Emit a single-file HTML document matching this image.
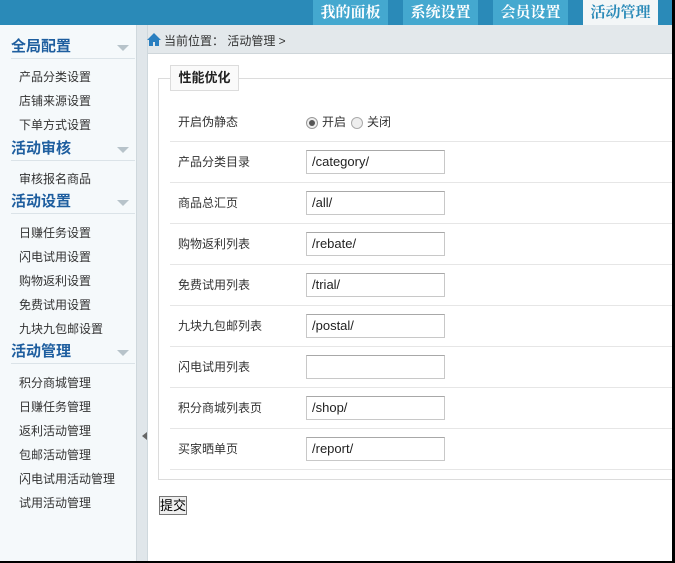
<!DOCTYPE html>
<html><head><meta charset="utf-8"><style>
*{margin:0;padding:0;box-sizing:border-box}
body{width:675px;height:563px;overflow:hidden;position:relative;background:#fff;font-family:"Liberation Sans","Noto Sans CJK SC",sans-serif;font-size:12px;color:#333}
.a{position:absolute}
.tab{position:absolute;top:0;height:25px;width:75px;background:#44a8cf;color:#fff;font-weight:bold;font-size:15px;text-align:center;line-height:23px;font-family:"Noto Serif CJK SC","Noto Sans CJK SC",serif}
.h{position:absolute;left:11px;width:124px;color:#1e5e9f;font-weight:bold;font-size:15px;height:24px;line-height:24px;border-bottom:1px solid #dbe3e8}
.h:after{content:"";position:absolute;right:6px;top:10px;border:6px solid transparent;border-top:6px solid #b7c3ca;border-bottom:0}
.it{position:absolute;left:19px;font-size:12px;color:#333;line-height:14px}
.lb{position:absolute;left:178px;font-size:12px;line-height:14px}
.in{position:absolute;left:306px;width:139px;height:24px;border:1px solid #c8c8c8;border-top-color:#a8a8a8;background:#fff;font-size:13px;line-height:22px;padding-left:5px;color:#222}
.ln{position:absolute;left:170px;width:502px;height:1px;background:#e6e6e6}
</style></head><body>
<div class="a" style="left:0;top:0;width:675px;height:25px;background:#2a8ab8"></div>
<div class="tab" style="left:313px">我的面板</div>
<div class="tab" style="left:403px">系统设置</div>
<div class="tab" style="left:493px">会员设置</div>
<div class="tab" style="left:583px;background:#f3f6f7;color:#2a8ab8">活动管理</div>
<div class="a" style="left:0;top:25px;width:136px;height:538px;background:#f5f9fb"></div>
<div class="a" style="left:136px;top:25px;width:12px;height:538px;background:#e0e6ea;border-left:1px solid #cfd8dd;border-right:1px solid #cfd8dd"></div>
<div class="a" style="left:142px;top:432px;border:4px solid transparent;border-right:5px solid #666;border-left:0"></div>
<div class="h" style="top:35px">全局配置</div>
<div class="it" style="top:70px">产品分类设置</div>
<div class="it" style="top:94px">店铺来源设置</div>
<div class="it" style="top:118px">下单方式设置</div>
<div class="h" style="top:137px">活动审核</div>
<div class="it" style="top:172px">审核报名商品</div>
<div class="h" style="top:190px">活动设置</div>
<div class="it" style="top:226px">日赚任务设置</div>
<div class="it" style="top:250px">闪电试用设置</div>
<div class="it" style="top:274px">购物返利设置</div>
<div class="it" style="top:298px">免费试用设置</div>
<div class="it" style="top:322px">九块九包邮设置</div>
<div class="h" style="top:340px">活动管理</div>
<div class="it" style="top:376px">积分商城管理</div>
<div class="it" style="top:400px">日赚任务管理</div>
<div class="it" style="top:424px">返利活动管理</div>
<div class="it" style="top:448px">包邮活动管理</div>
<div class="it" style="top:472px">闪电试用活动管理</div>
<div class="it" style="top:496px">试用活动管理</div>
<div class="a" style="left:148px;top:25px;width:524px;height:29px;background:#e3e8eb;border-bottom:1px solid #cfd6da"></div>
<svg class="a" style="left:147px;top:33px" width="14" height="13" viewBox="0 0 14 13"><path d="M7 0L0 7h2v6h4V9h2v4h4V7h2z" fill="#2a7fc0"/></svg>
<div class="a" style="left:164px;top:34px;font-size:12px;line-height:14px">当前位置： 活动管理 &gt;</div>
<div class="a" style="left:158px;top:78px;width:514px;height:402px;border:1px solid #dcdcdc;border-right:0"></div>
<div class="a" style="left:170px;top:65px;width:69px;height:26px;background:#fafafa;border:1px solid #dcdcdc;font-weight:bold;font-size:13px;line-height:24px;text-align:center;color:#222">性能优化</div>
<div class="lb" style="top:115px">开启伪静态</div>
<div class="a" style="left:306px;top:117px;width:12px;height:12px;border-radius:50%;border:1px solid #999;background:#eee"><div style="margin:2px;width:6px;height:6px;border-radius:50%;background:#555"></div></div>
<div class="a" style="left:322px;top:115px;line-height:14px">开启</div>
<div class="a" style="left:351px;top:117px;width:12px;height:12px;border-radius:50%;border:1px solid #aaa;background:#eee"></div>
<div class="a" style="left:367px;top:115px;line-height:14px">关闭</div>
<div class="ln" style="top:141px"></div>
<div class="lb" style="top:155px">产品分类目录</div><div class="in" style="top:150px">/category/</div>
<div class="ln" style="top:182px"></div>
<div class="lb" style="top:196px">商品总汇页</div><div class="in" style="top:191px">/all/</div>
<div class="ln" style="top:223px"></div>
<div class="lb" style="top:237px">购物返利列表</div><div class="in" style="top:232px">/rebate/</div>
<div class="ln" style="top:264px"></div>
<div class="lb" style="top:278px">免费试用列表</div><div class="in" style="top:273px">/trial/</div>
<div class="ln" style="top:305px"></div>
<div class="lb" style="top:319px">九块九包邮列表</div><div class="in" style="top:314px">/postal/</div>
<div class="ln" style="top:346px"></div>
<div class="lb" style="top:360px">闪电试用列表</div><div class="in" style="top:355px"></div>
<div class="ln" style="top:387px"></div>
<div class="lb" style="top:401px">积分商城列表页</div><div class="in" style="top:396px">/shop/</div>
<div class="ln" style="top:428px"></div>
<div class="lb" style="top:442px">买家晒单页</div><div class="in" style="top:437px">/report/</div>
<div class="ln" style="top:469px"></div>
<div class="a" style="left:159px;top:496px;width:28px;height:19px;border:1px solid #777;background:#eee;font-size:13px;line-height:17px;text-align:center;color:#000">提交</div>
<div class="a" style="left:672px;top:0;width:3px;height:563px;background:#000"></div>
<div class="a" style="left:0;top:561px;width:675px;height:2px;background:#000"></div>
</body></html>
